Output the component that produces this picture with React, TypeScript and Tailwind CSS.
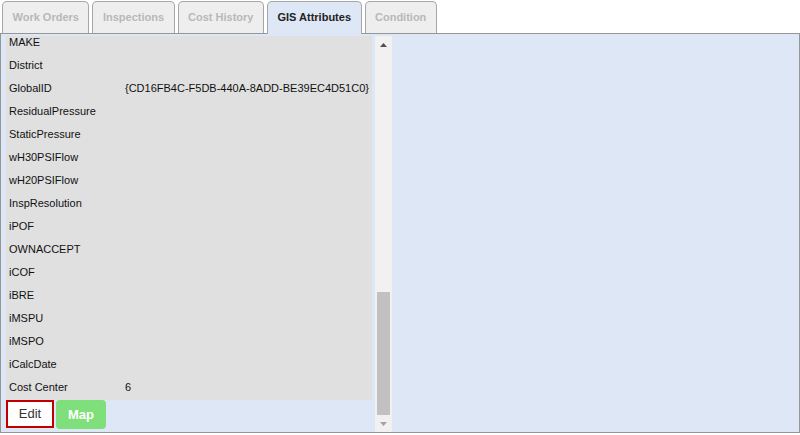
import React from 'react';

const tabs = [
  { label: 'Work Orders', active: false },
  { label: 'Inspections', active: false },
  { label: 'Cost History', active: false },
  { label: 'GIS Attributes', active: true },
  { label: 'Condition', active: false },
];

const attributes: [string, string][] = [
  ['MAKE', ''],
  ['District', ''],
  ['GlobalID', '{CD16FB4C-F5DB-440A-8ADD-BE39EC4D51C0}'],
  ['ResidualPressure', ''],
  ['StaticPressure', ''],
  ['wH30PSIFlow', ''],
  ['wH20PSIFlow', ''],
  ['InspResolution', ''],
  ['iPOF', ''],
  ['OWNACCEPT', ''],
  ['iCOF', ''],
  ['iBRE', ''],
  ['iMSPU', ''],
  ['iMSPO', ''],
  ['iCalcDate', ''],
  ['Cost Center', '6'],
];

function Tab({ label, active }: { label: string; active: boolean }) {
  return active ? (
    <div className="relative z-10 -mb-px flex h-[33px] items-center rounded-t-[5px] border border-b-0 border-[#a6a6a6] bg-[#dee7f5] px-[9.5px] pb-[2px] text-[11px] font-bold text-[#222]">
      {label}
    </div>
  ) : (
    <div className="flex h-[32px] items-center rounded-t-[5px] border border-b-0 border-[#a6a6a6] bg-[#eeeeee] px-[9.5px] pb-[1px] text-[11px] font-bold text-[#b8b8b8]">
      {label}
    </div>
  );
}

function ScrollBar() {
  return (
    <div className="flex h-full w-[17px] shrink-0 flex-col bg-[#f1f1f1]">
      <div className="flex h-[17px] items-center justify-center">
        <svg width="7" height="4" viewBox="0 0 7 4">
          <polygon points="3.5,0 7,4 0,4" fill="#505050" />
        </svg>
      </div>
      <div className="flex flex-1 flex-col justify-end px-[2px]">
        <div className="h-[123px] bg-[#c1c1c1]" />
      </div>
      <div className="flex h-[17px] items-center justify-center">
        <svg width="7" height="4" viewBox="0 0 7 4">
          <polygon points="0,0 7,0 3.5,4" fill="#a3a3a3" />
        </svg>
      </div>
    </div>
  );
}

export default function App() {
  return (
    <div className="h-[435px] w-[800px] bg-white font-['Liberation_Sans',Arial,sans-serif]">
      <div className="flex h-[33px] items-end gap-[3px] pl-[2px]">
        {tabs.map((t) => (
          <Tab key={t.label} label={t.label} active={t.active} />
        ))}
      </div>

      <div className="h-[400px] border border-[#969696] bg-[#dee7f5] pl-[5px] pt-[2px]">
        <div className="flex h-[396px] gap-[3px]">
          <div className="flex w-[366px] flex-col justify-end overflow-hidden pb-[3px]">
            <div className="shrink-0 bg-[#e0e0e0] pb-[1px]">
              {attributes.map(([name, value]) => (
                <div key={name} className="flex h-[23px] items-center text-[11px] leading-[23px] text-[#111]">
                  <span className="w-[116px] shrink-0 pl-[3px]">{name}</span>
                  <span className="whitespace-nowrap pl-[3px]">{value}</span>
                </div>
              ))}
            </div>
            <div className="flex shrink-0 items-start gap-[2px]">
              <button className="h-[28px] w-[48px] border-2 border-[#c00000] bg-white text-[13px] text-[#333]">
                Edit
              </button>
              <button className="h-[29px] w-[50px] rounded-[4px] bg-[#7fdf7a] text-[13px] font-bold text-white">
                Map
              </button>
            </div>
          </div>
          <ScrollBar />
        </div>
      </div>
    </div>
  );
}
